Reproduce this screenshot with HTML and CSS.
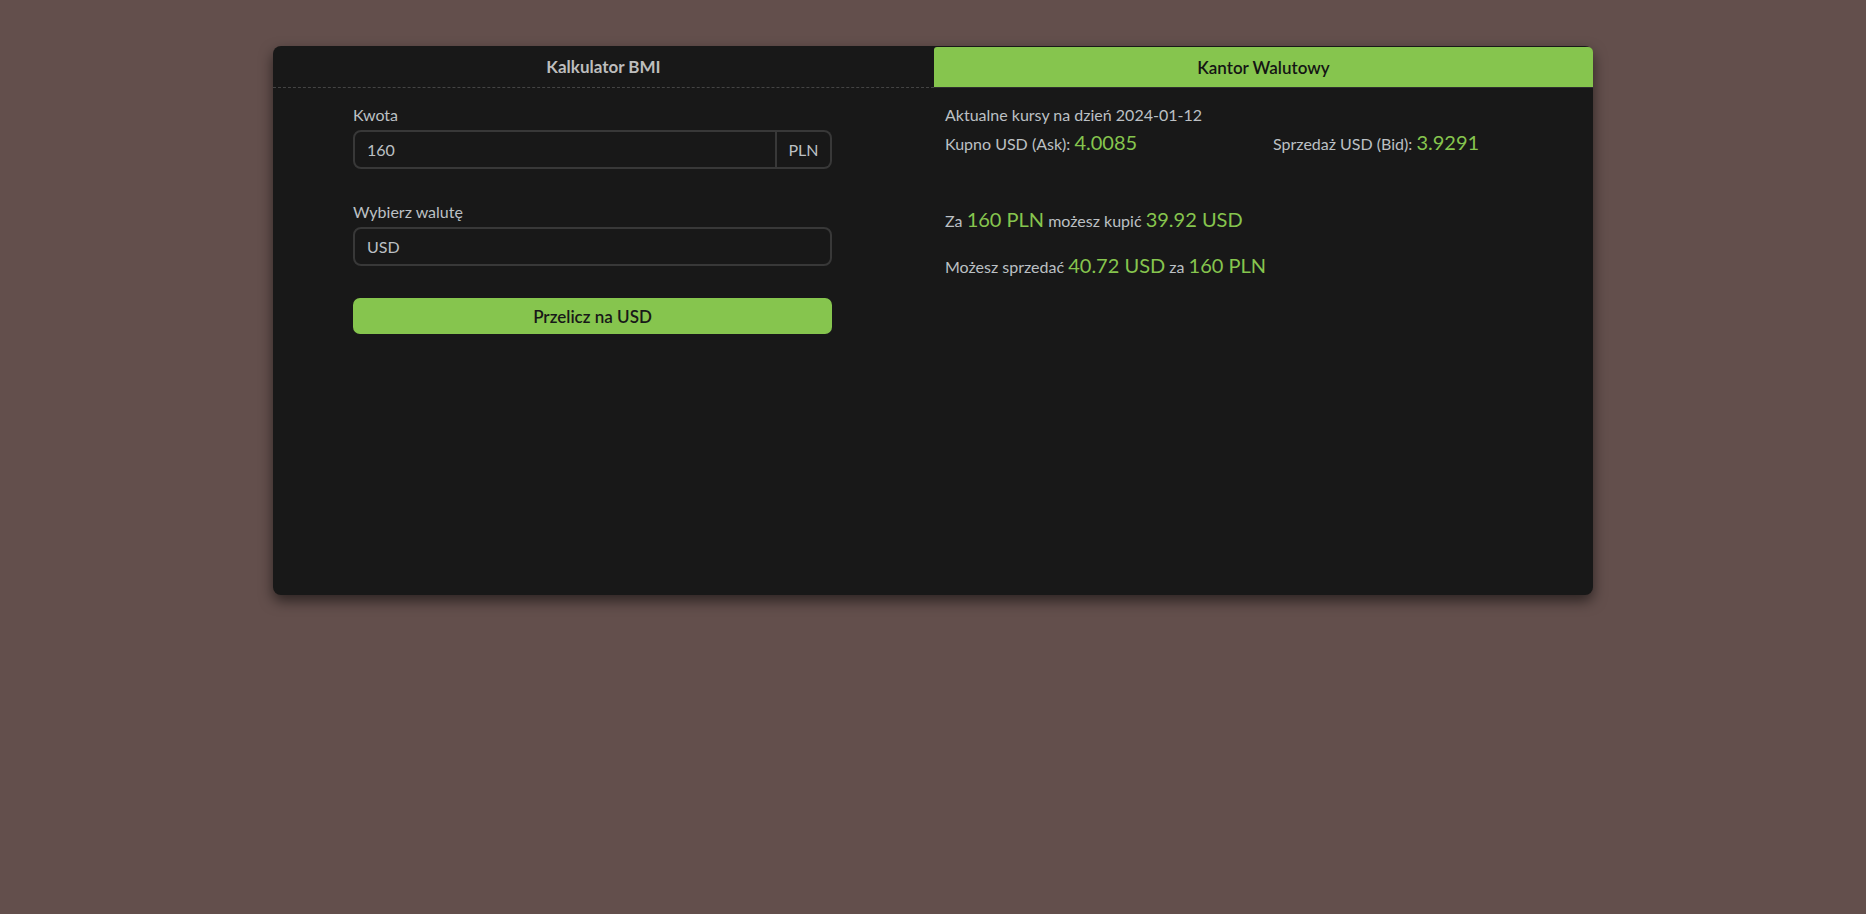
FILE: index.html
```html
<!DOCTYPE html>
<html lang="pl">
<head>
<meta charset="utf-8">
<title>Kantor Walutowy</title>
<link rel="stylesheet" href="styles.css">
</head>
<body>
<div class="card">
  <div class="tabs">
    <div class="tab">Kalkulator BMI</div>
    <div class="tab active">Kantor Walutowy</div>
  </div>
  <div class="content">
    <div class="pane-left">
      <form class="form">
        <label class="label">Kwota</label>
        <div class="input-group">
          <input class="field" type="text" value="160">
          <span class="addon">PLN</span>
        </div>
        <label class="label label-second">Wybierz walutę</label>
        <select class="field select">
          <option>USD</option>
        </select>
        <button class="btn" type="button">Przelicz na USD</button>
      </form>
    </div>
    <div class="pane-right">
      <div class="line">Aktualne kursy na dzień 2024-01-12</div>
      <div class="rates">
        <div class="line-big">Kupno USD (Ask): <span class="val">4.0085</span></div>
        <div class="line-big">Sprzedaż USD (Bid): <span class="val">3.9291</span></div>
      </div>
      <div class="line-big result first">Za <span class="val">160 PLN</span> możesz kupić <span class="val">39.92 USD</span></div>
      <div class="line-big result">Możesz sprzedać <span class="val">40.72 USD</span> za <span class="val">160 PLN</span></div>
    </div>
  </div>
</div>
</body>
</html>
```
FILE: styles.css
```css
* { box-sizing: border-box; }
html, body { margin: 0; padding: 0; }
body {
  background: #634f4c;
  font-family: Lato, "Noto Sans", sans-serif;
  color: #bcc0c4;
  font-size: 16px;
  min-height: 914px;
  padding-top: 46px;
}
.card {
  width: 1320px;
  height: 549px;
  margin: 0 auto;
  background: #181818;
  border-radius: 8px;
  box-shadow: 0 6px 14px rgba(0, 0, 0, 0.55);
}
.tabs {
  display: flex;
  height: 42px;
}
.tab {
  flex: 0 0 661px;
  display: flex;
  align-items: center;
  justify-content: center;
  font-size: 17px;
  font-weight: 700;
  color: #bdbdbd;
  border-bottom: 1px dashed #444;
}
.tab.active {
  flex: 1 1 auto;
  background: #86c54e;
  color: #141414;
  margin-top: 1px;
  border-radius: 3px 5px 0 0;
  border-bottom: 1px solid #2e2e2e;
  font-weight: 600;
}
.content {
  display: flex;
}
.pane-left {
  flex: 0 0 661px;
  padding: 15px 0 0 80px;
}
.form {
  width: 479px;
  display: flex;
  flex-direction: column;
}
.label {
  line-height: 24px;
  margin-bottom: 3px;
  color: #bcc0c4;
}
.label-second { margin-top: 31px; }
.input-group {
  display: flex;
  height: 39px;
}
.field {
  height: 39px;
  background: #181818;
  border: 2px solid #383838;
  border-radius: 8px;
  color: #bcc0c4;
  font-family: inherit;
  font-size: 16px;
  padding: 0 12px;
  outline: none;
}
.input-group .field {
  flex: 1 1 auto;
  border-radius: 8px 0 0 8px;
  min-width: 0;
}
.addon {
  flex: 0 0 55px;
  display: flex;
  align-items: center;
  justify-content: center;
  border: 2px solid #383838;
  border-left-width: 0;
  border-radius: 0 8px 8px 0;
  color: #bcc0c4;
}
.select {
  appearance: none;
  -webkit-appearance: none;
  width: 100%;
}
.btn {
  margin-top: 32px;
  height: 36px;
  background: #86c54e;
  color: #181818;
  border: none;
  border-radius: 7px;
  font-family: inherit;
  font-size: 17px;
  font-weight: 600;
}
.pane-right {
  flex: 1 1 auto;
  padding: 15px 0 0 11px;
}
.line { line-height: 24px; }
.line-big { line-height: 30px; }
.rates {
  display: grid;
  grid-template-columns: 328px 328px;
}
.val {
  color: #86c54e;
  font-size: 20px;
}
.result.first { margin-top: 45px; }
.result { margin-top: 14px; }
```
